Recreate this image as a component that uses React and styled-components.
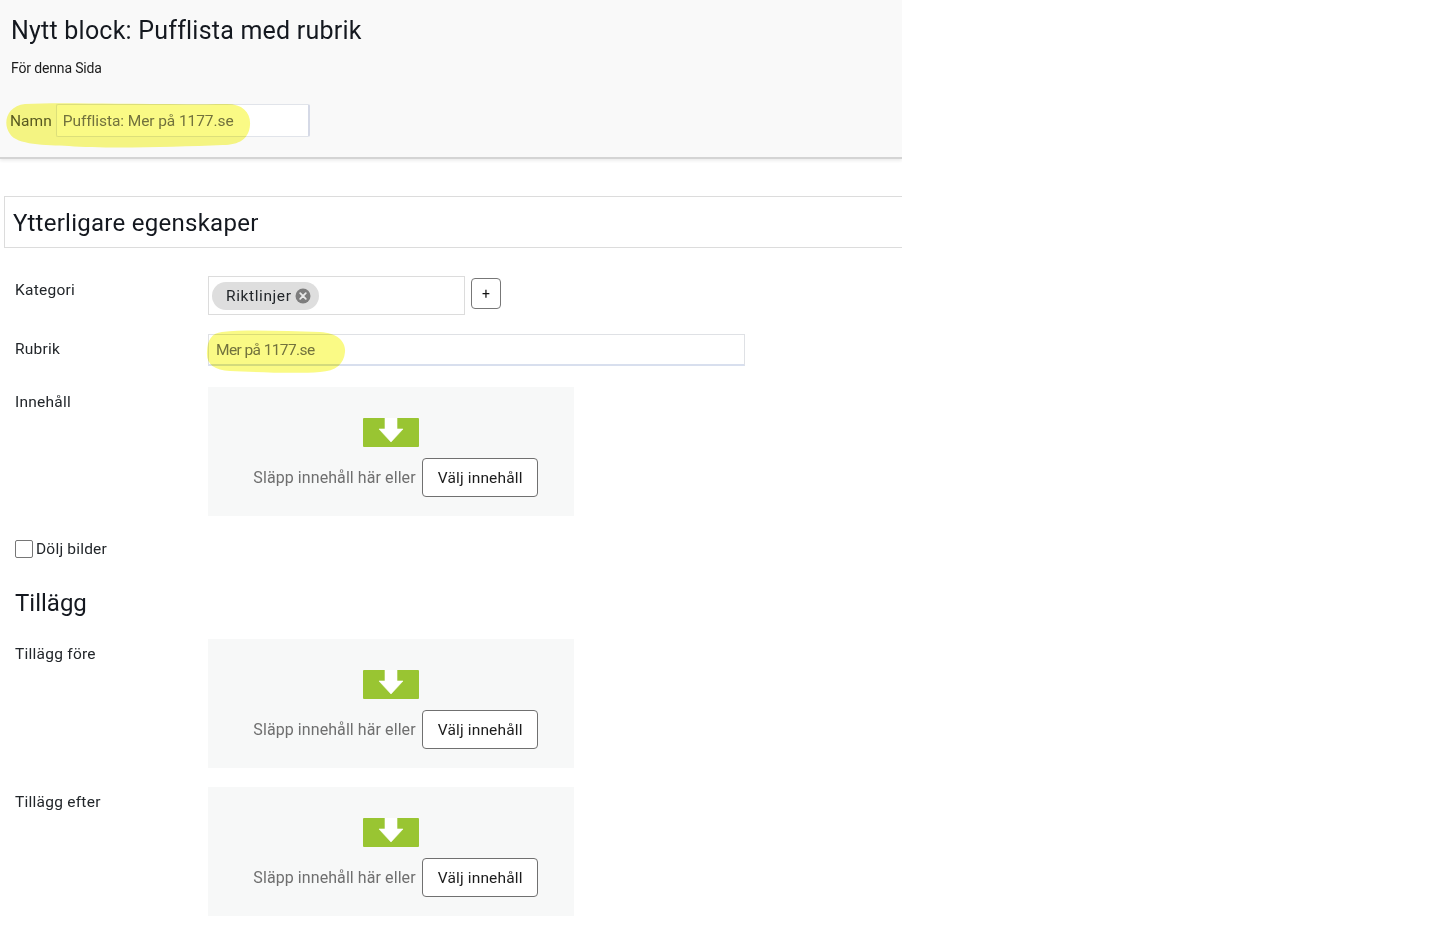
import React from "react";
import styled, { createGlobalStyle } from "styled-components";

const GlobalStyle = createGlobalStyle`
  html, body {
    margin: 0;
    padding: 0;
    background: #fff;
  }
  body {
    font-family: Roboto, "Liberation Sans", sans-serif;
    color: #1b1b1b;
  }
`;

const Page = styled.div`
  width: 902px;
  height: 937px;
  overflow: hidden;
`;

const Header = styled.header`
  height: 159px;
  background: #f9f9f9;
  padding: 16px 0 0 11px;
  box-sizing: border-box;
  border-bottom: 2px solid #d4d4d4;
  box-shadow: 0 2px 3px #eee;
`;

const Title = styled.h1`
  margin: 0;
  font-size: 25px;
  line-height: 30px;
  font-weight: 400;
  letter-spacing: 0.22px;
  color: #14181f;
`;

const Subtitle = styled.div`
  margin-top: 13px;
  font-size: 14px;
  line-height: 18px;
  letter-spacing: -0.15px;
`;

const NameRow = styled.div`
  position: relative;
  display: flex;
  align-items: center;
  gap: 4px;
  margin: 27px 0 0 -1px;
`;

const NameLabel = styled.label`
  font-size: 15.5px;
  letter-spacing: 0.05px;
  color: #5a5b3c;
`;

const NameInput = styled.div`
  width: 254px;
  height: 33px;
  box-sizing: border-box;
  padding: 1px 0 0 6px;
  display: flex;
  align-items: center;
  background: #fff;
  border: 1px solid #e1e4ea;
  border-right: 2px solid #d5d9e6;
  font-size: 15.5px;
  letter-spacing: -0.08px;
  color: #747474;
  border-radius: 2px;
`;

const Highlight = styled.svg`
  position: absolute;
  left: ${(p) => p.$left}px;
  top: ${(p) => p.$top}px;
  mix-blend-mode: multiply;
  pointer-events: none;
`;

const Section = styled.section`
  margin: 37px 0 0 4px;
`;

const SectionTitle = styled.h2`
  margin: 0;
  height: 52px;
  box-sizing: border-box;
  padding: 2px 0 0 8px;
  display: flex;
  align-items: center;
  font-size: 24px;
  font-weight: 400;
  letter-spacing: 0.27px;
  color: #14181f;
  border: 1px solid #dcdcdc;
  border-right: none;
`;

const Form = styled.div`
  padding: 28px 0 0 11px;
`;

const Row = styled.div`
  display: grid;
  grid-template-columns: 193px 1fr;
  margin-bottom: ${(p) => p.$gap}px;
`;

const Label = styled.label`
  font-size: 15.5px;
  line-height: 20px;
  padding-top: ${(p) => p.$top || 4}px;
  letter-spacing: 0.25px;
  color: #22262a;
`;

const CategoryLine = styled.div`
  display: flex;
  gap: 6px;
  align-items: center;
`;

const CategoryBox = styled.div`
  width: 257px;
  height: 39px;
  box-sizing: border-box;
  border: 1px solid #dcdcdc;
  padding-left: 3px;
  display: flex;
  align-items: center;
`;

const Chip = styled.span`
  height: 28px;
  padding: 0 8px 0 14px;
  display: inline-flex;
  align-items: center;
  gap: 3px;
  border-radius: 14px;
  background: #dedede;
  font-size: 15.5px;
  letter-spacing: 0.6px;
  color: #22262a;
`;

const AddButton = styled.button`
  width: 30px;
  height: 31px;
  padding: 0;
  margin-top: -4px;
  background: #fff;
  border: 1px solid #777;
  border-radius: 4px;
  font: 400 14px Roboto, sans-serif;
  color: #111;
`;

const HeadingInputWrap = styled.div`
  position: relative;
  width: 537px;
`;

const HeadingInput = styled.div`
  height: 32px;
  box-sizing: border-box;
  padding-left: 7px;
  display: flex;
  align-items: center;
  border: 1px solid #dfe1e5;
  border-bottom: 2px solid #d8dfee;
  font-size: 15.5px;
  letter-spacing: -0.6px;
  color: #747474;
`;

const DropZone = styled.div`
  width: 366px;
  height: 129px;
  box-sizing: border-box;
  padding-top: 31px;
  background: #f7f8f8;
  display: flex;
  flex-direction: column;
  align-items: center;
`;

const DropIcon = styled.svg`
  display: block;
`;

const DropLine = styled.div`
  margin-top: 11px;
  display: flex;
  align-items: center;
  gap: 6px;
  margin-left: 9px;
  font-size: 16px;
  letter-spacing: 0.08px;
  color: #6f6f6f;
`;

const ChooseButton = styled.button`
  width: 116px;
  height: 39px;
  padding: 1px 0 0 1px;
  background: #fff;
  border: 1px solid #707070;
  border-radius: 4px;
  font: 400 15.5px Roboto, sans-serif;
  letter-spacing: 0.15px;
  color: #1c1c1c;
`;

const CheckRow = styled.label`
  display: flex;
  align-items: center;
  gap: 3px;
  height: 20px;
  font-size: 15.5px;
  letter-spacing: 0.2px;
  color: #22262a;
`;

const CheckBox = styled.span`
  width: 18px;
  height: 18px;
  box-sizing: border-box;
  border: 1.5px solid #767676;
  border-radius: 2px;
  background: #fff;
`;

const SubHeading = styled.h3`
  margin: 29px 0 21px;
  font-size: 24px;
  line-height: 30px;
  font-weight: 400;
  color: #14181f;
`;

function ClearIcon() {
  return (
    <svg width="16" height="16" viewBox="0 0 16 16">
      <circle cx="8" cy="8" r="7.5" fill="#7d7d7d" />
      <path d="M5.2 5.2l5.6 5.6M10.8 5.2l-5.6 5.6" stroke="#e8e8e8" strokeWidth="1.8" strokeLinecap="round" />
    </svg>
  );
}

function ContentDrop() {
  return (
    <DropZone>
      <DropIcon width="56" height="29" viewBox="0 0 56 29">
        <rect width="56" height="29" rx="1" fill="#99c532" />
        <path d="M22 0h12v11h6L28 24 16 11h6z" fill="#fff" stroke="#fff" strokeWidth="0.6" strokeLinejoin="round" />
      </DropIcon>
      <DropLine>
        Släpp innehåll här eller
        <ChooseButton type="button">Välj innehåll</ChooseButton>
      </DropLine>
    </DropZone>
  );
}

export default function App() {
  return (
    <Page>
      <GlobalStyle />
      <Header>
        <Title>Nytt block: Pufflista med rubrik</Title>
        <Subtitle>För denna Sida</Subtitle>
        <NameRow>
          <NameLabel>Namn</NameLabel>
          <NameInput>Pufflista: Mer på 1177.se</NameInput>
          <Highlight $left={-5} $top={-1} width="246" height="46" viewBox="0 0 246 46">
            <path
              d="M20 1C60 -1 130 2 222 1C238 1 246 10 245 22C244 36 234 42 218 42C170 44 100 46 64 43C40 42 12 42 5 31C-3 20 2 3 20 1z"
              fill="#fafa85"
            />
          </Highlight>
        </NameRow>
      </Header>

      <Section>
        <SectionTitle>Ytterligare egenskaper</SectionTitle>
        <Form>
          <Row $gap={19}>
            <Label>Kategori</Label>
            <CategoryLine>
              <CategoryBox>
                <Chip>
                  Riktlinjer
                  <ClearIcon />
                </Chip>
              </CategoryBox>
              <AddButton type="button">+</AddButton>
            </CategoryLine>
          </Row>

          <Row $gap={21}>
            <Label $top={5}>Rubrik</Label>
            <HeadingInputWrap>
              <HeadingInput>Mer på 1177.se</HeadingInput>
              <Highlight $left={-2} $top={-4} width="140" height="44" viewBox="0 0 140 44">
                <path
                  d="M16 2C40 -1 80 1 114 2C132 3 140 12 139 22C138 34 130 41 114 42C90 44 50 42 24 41C8 40 0 34 1 22C1 10 6 3 16 2z"
                  fill="#fafa85"
                />
              </Highlight>
            </HeadingInputWrap>
          </Row>

          <Row $gap={23}>
            <Label $top={5}>Innehåll</Label>
            <ContentDrop />
          </Row>

          <CheckRow>
            <CheckBox />
            Dölj bilder
          </CheckRow>

          <SubHeading>Tillägg</SubHeading>

          <Row $gap={19}>
            <Label $top={5}>Tillägg före</Label>
            <ContentDrop />
          </Row>

          <Row $gap={19}>
            <Label $top={5}>Tillägg efter</Label>
            <ContentDrop />
          </Row>
        </Form>
      </Section>
    </Page>
  );
}
